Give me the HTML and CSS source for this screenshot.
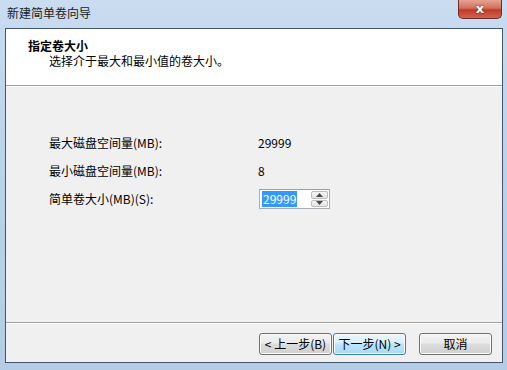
FILE: index.html
```html
<!DOCTYPE html>
<html lang="zh-CN">
<head>
<meta charset="utf-8">
<title>新建简单卷向导</title>
<link rel="stylesheet" href="styles.css">
</head>
<body>
<div class="window">
  <div class="titlebar">
    <span class="title">新建简单卷向导</span>
    <div class="close"><span>x</span></div>
  </div>
  <div class="client">
    <div class="header">
      <div class="h-title">指定卷大小</div>
      <div class="h-sub">选择介于最大和最小值的卷大小。</div>
    </div>
    <div class="content">
      <div class="row"><span class="label">最大磁盘空间量(MB):</span><span class="value">29999</span></div>
      <div class="row"><span class="label">最小磁盘空间量(MB):</span><span class="value">8</span></div>
      <div class="row"><span class="label">简单卷大小(MB)(S):</span>
        <div class="spin">
          <div class="spin-text"><span class="sel">29999</span></div>
          <div class="spin-btns">
            <div class="sb"><svg width="7" height="4" viewBox="0 0 7 4"><path d="M0 4 L3.5 0 L7 4 Z" fill="#4a4a4a"/></svg></div>
            <div class="sb"><svg width="7" height="4" viewBox="0 0 7 4"><path d="M0 0 L3.5 4 L7 0 Z" fill="#4a4a4a"/></svg></div>
          </div>
        </div>
      </div>
    </div>
    <div class="footer">
      <div class="btn">&lt; 上一步(B)</div>
      <div class="btn primary">下一步(N) &gt;</div>
      <div class="btn cancel">取消</div>
    </div>
  </div>
</div>
</body>
</html>
```
FILE: styles.css
```css
html, body { margin: 0; padding: 0; }
body {
  width: 507px; height: 370px; overflow: hidden;
  font-family: "Noto Sans CJK SC", "Liberation Sans", sans-serif;
  font-size: 12px; color: #000;
}
.window {
  width: 507px; height: 370px; box-sizing: border-box;
  display: flex; flex-direction: column;
  background: linear-gradient(180deg, #c9dcf0 0%, #bcd3ec 40%, #b4cce6 100%);
  padding: 0 4px 7px 5px;
}
.titlebar {
  height: 28px; display: flex; align-items: flex-start; justify-content: space-between;
}
.title { margin-top: 5px; margin-left: 2px; line-height: 16px; color: #1a1a1a; }
.close {
  width: 44px; height: 19px; margin-right: 1px; box-sizing: border-box;
  border: 1px solid #6b2a22; border-top: none; border-radius: 0 0 5px 5px;
  background: linear-gradient(180deg, #e8a393 0%, #d1705b 45%, #c0392b 55%, #d3624c 100%);
  display: flex; align-items: center; justify-content: center;
}
.close span {
  color: #fff; font-family: "DejaVu Sans", sans-serif; font-weight: bold; font-size: 13px;
  line-height: 13px; margin-top: -2px; text-shadow: 0 0 2px #5a1a10;
}
.client {
  flex: 1; display: flex; flex-direction: column;
  border: 1px solid #44546a; background: #f0f0f0;
}
.header {
  height: 57px; background: #fff; box-sizing: border-box;
  border-bottom: 1px solid #a0a0a0; box-shadow: 0 1px 0 #fff;
  padding: 9px 0 0 22px;
}
.h-title { font-weight: bold; line-height: 15px; height: 15px; }
.h-sub { padding-left: 21px; line-height: 15px; }
.content {
  flex: 1; padding: 49px 0 0 43px; display: flex; flex-direction: column; gap: 12px;
}
.row { display: flex; align-items: center; height: 16px; line-height: 16px; }
.label { width: 209px; }
.spin {
  width: 71px; height: 20px; box-sizing: border-box; margin-left: 1px;
  border: 1px solid #abadb3; border-top-color: #9ea0a6; background: #fff;
  display: flex;
}
.spin-text { flex: 1; padding: 1px 0 0 2px; line-height: 16px; }
.sel { background: #3399ff; color: #fff; display: inline-block; padding: 0 1px; line-height: 16px; }
.spin-btns { width: 17px; display: flex; flex-direction: column; padding: 1px 1px 1px 0; gap: 1px; }
.sb {
  flex: 1; border: 1px solid #bdbdbd; border-radius: 2px;
  background: linear-gradient(180deg, #f6f6f6, #e4e4e4);
  display: flex; align-items: center; justify-content: center;
}
.footer {
  height: 40px; box-sizing: border-box; border-top: 1px solid #a0a0a0; box-shadow: inset 0 1px 0 #fff;
  display: flex; align-items: flex-start; padding: 10px 0 0 253px;
}
.btn {
  width: 73px; height: 22px; box-sizing: border-box;
  border: 1px solid #707070; border-radius: 3px;
  background: linear-gradient(180deg, #f2f2f2 0%, #ebebeb 45%, #dddddd 50%, #cfcfcf 100%);
  box-shadow: inset 0 0 0 1px #fcfcfc;
  display: flex; align-items: center; justify-content: center; line-height: 16px;
}
.btn.primary {
  margin-left: 1px;
  border-color: #3c7fb1;
  background: linear-gradient(180deg, #eaf6fd 0%, #d9f0fc 45%, #bee6fd 50%, #a7d9f5 100%);
}
.btn.cancel { margin-left: 13px; }
```
